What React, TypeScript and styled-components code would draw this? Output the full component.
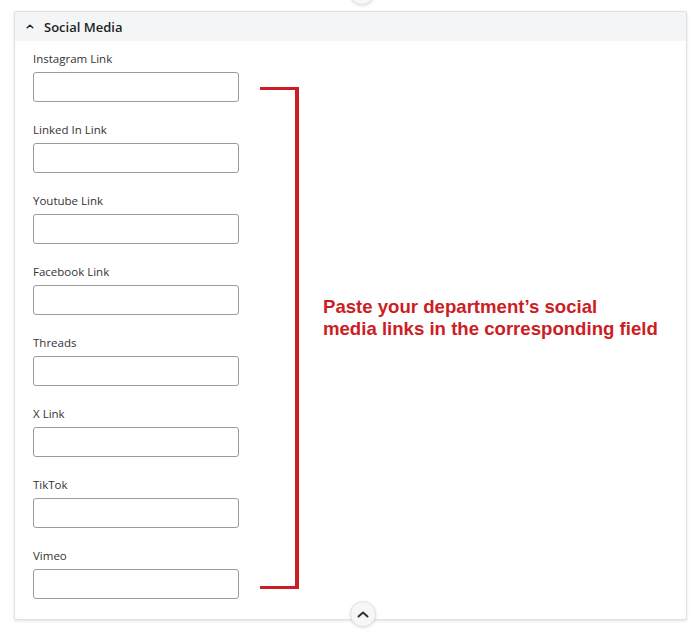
import React from 'react';
import styled, { createGlobalStyle } from 'styled-components';

const Global = createGlobalStyle`
  html, body { margin: 0; padding: 0; background: #fff; }
  body { font-family: "Open Sans", "Liberation Sans", sans-serif; }
`;

const Page = styled.div`
  position: relative;
  width: 700px;
  height: 639px;
  overflow: hidden;
  padding: 11px 13px 0 14px;
  box-sizing: border-box;
`;

const Panel = styled.section`
  position: relative;
  width: 673px;
  box-sizing: border-box;
  border: 1px solid #dfe1e4;
  border-radius: 2px;
  box-shadow: 0 1px 3px rgba(0, 0, 0, 0.12);
  background: #fff;
`;

const Header = styled.div`
  height: 29px;
  background: #f4f5f7;
  display: flex;
  align-items: center;
  gap: 10px;
  padding-left: 11px;
  font-weight: 600;
  font-size: 13px;
  color: #1f1f1f;
`;

const Body = styled.div`
  display: flex;
  padding: 11px 0 20px 18px;
`;

const Fields = styled.div`
  display: flex;
  flex-direction: column;
  gap: 21px;
  width: 206px;
`;

const Field = styled.label`
  display: flex;
  flex-direction: column;
  gap: 6px;
  font-size: 11.5px;
  line-height: 14px;
  color: #333;
`;

const Input = styled.input`
  height: 30px;
  width: 206px;
  box-sizing: border-box;
  border: 1px solid #9b9b9b;
  border-radius: 3px;
  background: #fff;
  margin: 0;
`;

const Bracket = styled.div`
  width: 39px;
  box-sizing: border-box;
  margin: 35px 0 10px 21px;
  border-top: 3.5px solid #cc1d24;
  border-bottom: 3.5px solid #cc1d24;
  border-right: 4px solid #cc1d24;
`;

const Note = styled.p`
  margin: 244px 0 0 24px;
  align-self: flex-start;
  font-family: "Liberation Sans", Arial, sans-serif;
  font-weight: 700;
  font-size: 18.6px;
  line-height: 21.5px;
  color: #cc1d24;
`;

const RoundButton = styled.button<{ $top?: string; $bottom?: string }>`
  position: absolute;
  left: 335px;
  ${(p) => (p.$top ? `top: ${p.$top};` : '')}
  ${(p) => (p.$bottom ? `bottom: ${p.$bottom};` : '')}
  width: 26px;
  height: 26px;
  border-radius: 50%;
  border: 1px solid #e2e3e6;
  background: #f7f7f8;
  box-shadow: 0 1px 3px rgba(0, 0, 0, 0.12);
  display: flex;
  align-items: center;
  justify-content: center;
  padding: 0;
`;

const TopButton = styled(RoundButton)`
  left: 349px;
`;

const Chevron = ({ w, h, sw, color }: { w: number; h: number; sw: number; color: string }) => (
  <svg width={w} height={h} viewBox={`0 0 ${w} ${h}`} fill="none">
    <polyline
      points={`${sw / 2 + 0.5},${h - sw / 2 - 0.5} ${w / 2},${sw / 2 + 0.5} ${w - sw / 2 - 0.5},${h - sw / 2 - 0.5}`}
      stroke={color}
      strokeWidth={sw}
      strokeLinecap="round"
      strokeLinejoin="round"
    />
  </svg>
);

const fields = [
  'Instagram Link',
  'Linked In Link',
  'Youtube Link',
  'Facebook Link',
  'Threads',
  'X Link',
  'TikTok',
  'Vimeo',
];

export default function App() {
  return (
    <>
      <Global />
      <Page>
        <TopButton $top="-21px" aria-label="Collapse previous">
          <Chevron w={12} h={7} sw={2} color="#333" />
        </TopButton>
        <Panel>
          <Header>
            <Chevron w={8} h={5} sw={1.4} color="#222" />
            <span>Social Media</span>
          </Header>
          <Body>
            <Fields>
              {fields.map((f) => (
                <Field key={f}>
                  <span>{f}</span>
                  <Input type="text" />
                </Field>
              ))}
            </Fields>
            <Bracket />
            <Note>
              Paste your department’s social
              <br />
              media links in the corresponding field
            </Note>
          </Body>
          <RoundButton $bottom="-8px" aria-label="Collapse">
            <Chevron w={12} h={7} sw={2} color="#333" />
          </RoundButton>
        </Panel>
      </Page>
    </>
  );
}
